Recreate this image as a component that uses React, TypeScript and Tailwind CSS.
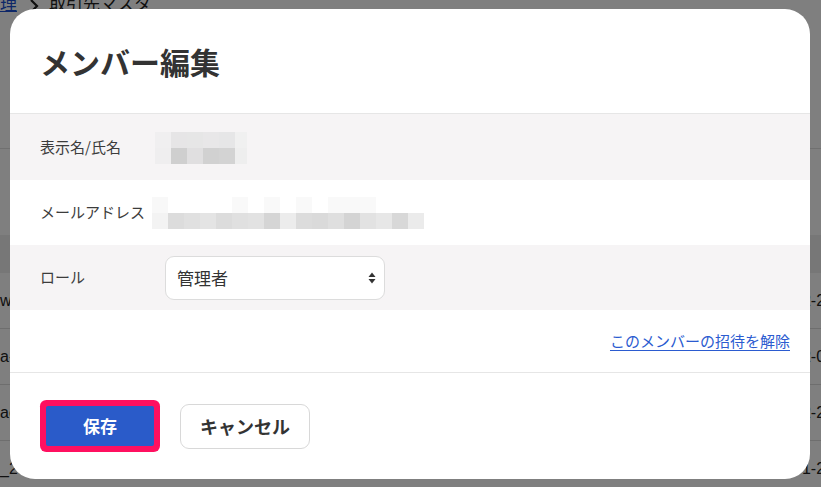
import React from "react";

const font = "font-['Noto_Sans_CJK_JP','Noto_Sans',sans-serif]";

// mosaic blocks standing in for the blurred values
const nameTop = ["#f0eff0", "#e6e5e6", "#e6e6e6", "#e8e7e8", "#e6e6e7", "#f0f0f0"];
const nameBottom = ["#efeeef", "#cfcfcf", "#e0dfe0", "#d1d1d1", "#d3d3d3", "#eeeeee"];
const mailTop = [
  "#f8f8f8", "#ffffff", "#ffffff", "#ffffff", "#ffffff", "#f9f9f9", "#ffffff", "#f9f9f9", "#ffffff",
  "#f9f9f9", "#ffffff", "#f9f9f9", "#f9f9f9", "#f9f9f9", "#ffffff", "#ffffff", "#ffffff",
];
const mailBottom = [
  "#f3f3f3", "#dcdcdc", "#e0e0e0", "#e4e4e4", "#dcdcdc", "#e0e0e0", "#e2e2e2", "#d5d5d5", "#ececec",
  "#dcdcdc", "#dadada", "#dfdfdf", "#d4d4d4", "#e2e2e2", "#e7e7e7", "#d8d8d8", "#ebebeb",
];

function Mosaic({ top, bottom, last = 16 }: { top: string[]; bottom: string[]; last?: number }) {
  const row = (cells: string[]) => (
    <div className="flex">
      {cells.map((c, i) => (
        <div
          key={i}
          className={i === cells.length - 1 && last !== 16 ? "h-[16px] w-[12px]" : "h-[16px] w-[16px]"}
          style={{ backgroundColor: c }}
        />
      ))}
    </div>
  );
  return (
    <div className="flex flex-col">
      {row(top)}
      {row(bottom)}
    </div>
  );
}

function Backdrop() {
  const rows = [
    { left: "w", right: "22-20" },
    { left: "a-", right: "22-01" },
    { left: "ac", right: "22-20" },
    { left: "_20", right: "01-20" },
  ];
  return (
    <div className="font-['Liberation_Sans',sans-serif] text-[16px] text-[#222]">
      {/* breadcrumb, mostly scrolled off */}
      <div className={`-mt-[9px] flex h-[23px] items-center text-[17px] ${font}`}>
        <span className="text-[#1a4fd0] underline">理</span>
        <svg width="10" height="14" viewBox="0 0 10 14" className="ml-[12px] mr-[10px] mt-[6px]">
          <path d="M2 1 L8 7 L2 13" stroke="#222" strokeWidth="2.2" fill="none" />
        </svg>
        <span>取引先マスタ</span>
      </div>
      <div className="h-[135px] border-b border-[#e0e0e0]" />
      <div className="h-[86px]" />
      <div className="h-[38px] bg-[#eeeeee]" />
      {rows.map((r, i) => (
        <div key={i} className="flex h-[56px] items-center border-b border-[#dddddd] whitespace-nowrap">
          <span className="w-[793px] shrink-0">{r.left}</span>
          <span>{r.right}</span>
        </div>
      ))}
    </div>
  );
}

export default function App() {
  return (
    <div className={`relative h-[487px] w-[821px] overflow-hidden bg-white ${font}`}>
      <Backdrop />
      <div className="absolute inset-0 bg-black/50" />

      <div className="absolute left-[10px] top-[9px] flex h-[470px] w-[800px] flex-col overflow-hidden rounded-[25px] bg-white text-[#333]">
        {/* Header */}
        <div className="flex h-[105px] shrink-0 items-center border-b border-[#e6e6e6] px-[30px]">
          <h1 className="text-[30px] font-bold leading-none text-[#333]">メンバー編集</h1>
        </div>

        {/* Display name */}
        <div className="flex h-[66px] shrink-0 items-center bg-[#f6f4f5] px-[30px]">
          <div className="w-[125px] shrink-0 text-[15px] text-[#3c3c3c]">表示名/氏名</div>
          <div className="-ml-[10px] pt-[1px]">
            <Mosaic top={nameTop} bottom={nameBottom} last={12} />
          </div>
        </div>

        {/* Email */}
        <div className="flex h-[65px] shrink-0 items-center bg-white px-[30px]">
          <div className="w-[125px] shrink-0 whitespace-nowrap text-[15px] text-[#3c3c3c]">メールアドレス</div>
          <div className="-ml-[13px] pt-[1px]">
            <Mosaic top={mailTop} bottom={mailBottom} />
          </div>
        </div>

        {/* Role */}
        <div className="flex h-[65px] shrink-0 items-center bg-[#f6f4f5] px-[30px]">
          <div className="w-[125px] shrink-0 text-[15px] text-[#3c3c3c]">ロール</div>
          <div className="flex h-[44px] w-[220px] items-center justify-between rounded-[9px] border border-[#dcdcdc] bg-white pl-[11px] pr-[8px]">
            <span className="text-[17px] text-[#333]">管理者</span>
            <svg width="8" height="12" viewBox="0 0 8 12" className="mt-[1px]">
              <path d="M4 0.5 L7.5 5 L0.5 5 Z" fill="#333" />
              <path d="M4 11.5 L7.5 7 L0.5 7 Z" fill="#333" />
            </svg>
          </div>
        </div>

        {/* Revoke invitation */}
        <div className="flex h-[63px] shrink-0 items-center justify-end border-b border-[#e6e6e6] px-[20px]">
          <a href="#" className="text-[15px] text-[#2b5bd0] underline underline-offset-[3px]">
            このメンバーの招待を解除
          </a>
        </div>

        {/* Footer */}
        <div className="flex flex-1 items-center gap-[26px] pl-[36px]">
          <button className="h-[40px] w-[108px] rounded-[2px] bg-[#2a5bc9] text-[17px] font-bold text-white ring-[6px] ring-[#ff1060]">
            保存
          </button>
          <button className="h-[45px] w-[130px] rounded-[9px] border border-[#d8d8d8] bg-white text-[18px] font-bold text-[#333]">
            キャンセル
          </button>
        </div>
      </div>
    </div>
  );
}
